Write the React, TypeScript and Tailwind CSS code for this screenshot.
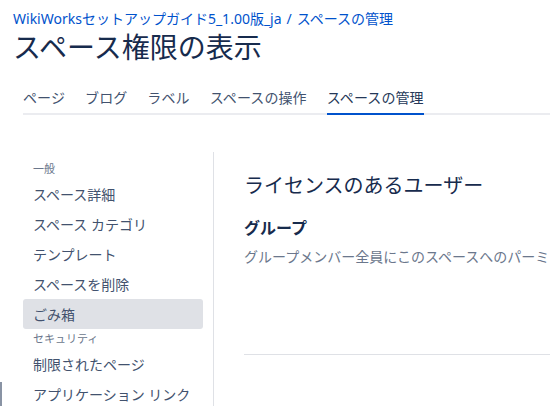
const font = { fontFamily: '"Noto Sans", "Noto Sans CJK JP", sans-serif' };

const tabs = ["ページ", "ブログ", "ラベル", "スペースの操作", "スペースの管理"];

type NavEntry = { label: string; section?: boolean; active?: boolean };

const nav: NavEntry[] = [
  { label: "一般", section: true },
  { label: "スペース詳細" },
  { label: "スペース カテゴリ" },
  { label: "テンプレート" },
  { label: "スペースを削除" },
  { label: "ごみ箱", active: true },
  { label: "セキュリティ", section: true },
  { label: "制限されたページ" },
  { label: "アプリケーション リンク" },
];

export default function App() {
  return (
    <div
      className="relative h-[406px] w-[550px] overflow-hidden bg-white text-[#172b4d]"
      style={font}
    >
      <header className="pl-[13px] pt-[8px]">
        <div className="flex h-[20px] items-center gap-[5px] whitespace-nowrap text-[14px] text-[#0052cc]">
          <span>WikiWorksセットアップガイド5_1.00版_ja</span>
          <span>/</span>
          <span>スペースの管理</span>
        </div>
        <h1 className="flex h-[38px] items-center whitespace-nowrap text-[28px] font-normal leading-none">
          スペース権限の表示
        </h1>
      </header>

      <nav className="ml-[23px] mt-[20px] flex gap-[20px] whitespace-nowrap border-b-2 border-[#ebecf0]">
        {tabs.map((t) => (
          <span
            key={t}
            className={`-mb-[2px] flex h-[29px] items-start pt-[1px] text-[14px] tracking-[0.1px] ${
              t === "スペースの管理"
                ? "border-b-2 border-[#0052cc] text-[#253858]"
                : "text-[#42526e]"
            }`}
          >
            {t}
          </span>
        ))}
      </nav>

      <div className="mt-[37px] flex">
        <aside className="flex w-[213px] shrink-0 flex-col pl-[23px] pr-[10px] pt-[7px]">
          {nav.map((n) =>
            n.section ? (
              <div
                key={n.label}
                className="flex h-[20px] items-center px-[10px] text-[11px] text-[#6b778c]"
              >
                {n.label}
              </div>
            ) : (
              <div
                key={n.label}
                className={`flex h-[30px] items-center whitespace-nowrap rounded-[3px] px-[10px] text-[14px] text-[#42526e] ${
                  n.active ? "bg-[#dfe1e6]" : ""
                }`}
              >
                {n.label}
              </div>
            )
          )}
        </aside>

        <main className="min-h-[260px] flex-1 border-l border-[#dfe1e6] pl-[30px] pt-[20px]">
          <h2 className="flex h-[28px] items-center whitespace-nowrap text-[20px] font-normal">
            ライセンスのあるユーザー
          </h2>
          <h3 className="mt-[16px] flex h-[24px] items-center text-[16px] font-bold">
            グループ
          </h3>
          <p className="mt-[6px] flex h-[20px] items-center whitespace-nowrap text-[14px] text-[#6b778c]">
            グループメンバー全員にこのスペースへのパーミッションを付与します
          </p>
          <div className="mt-[88px] h-px bg-[#dfe1e6]" />
        </main>
      </div>

      <div className="absolute bottom-0 left-0 h-[24px] w-[2px] bg-[#8993a4]" />
    </div>
  );
}
